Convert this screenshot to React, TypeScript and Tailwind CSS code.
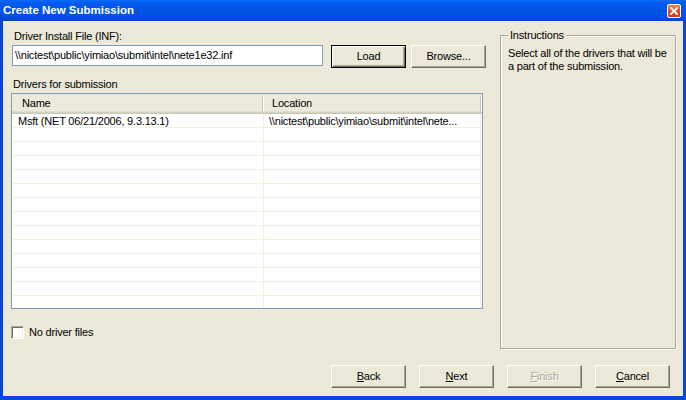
import React from 'react';

const rows = Array.from({ length: 14 }, (_, i) => i);

function XpButton({
  children,
  isDefault,
  disabled,
}: {
  children: React.ReactNode;
  isDefault?: boolean;
  disabled?: boolean;
}) {
  const frame = isDefault
    ? 'border border-black shadow-[inset_1px_1px_0_#fff,inset_-1px_-1px_0_#716F64,inset_-2px_-2px_0_#ACA899]'
    : 'border border-t-white border-l-white border-r-[#716F64] border-b-[#716F64] shadow-[inset_-1px_-1px_0_#ACA899]';
  return (
    <button
      className={`shrink-0 w-[75px] h-[23px] flex items-center justify-center bg-[#ECE9D8] text-[11px] leading-[13px] ${frame} ${
        disabled ? 'text-[#ACA899] [text-shadow:1px_1px_0_#fff]' : 'text-black'
      }`}
    >
      {children}
    </button>
  );
}

export default function App() {
  return (
    <div className="w-[686px] h-[400px] flex flex-col bg-[#0846dc] font-['Liberation_Sans',Arial,sans-serif] tracking-[-0.2px] select-none">
      {/* Title bar */}
      <div className="h-[21px] flex items-center justify-between pl-[3px] pr-[5px] bg-[linear-gradient(to_bottom,#0a6cf8_0%,#0059ee_15%,#0055e5_50%,#0050dc_80%,#0044c6_100%)]">
        <span className="text-white font-bold text-[11.5px] tracking-normal leading-[21px]">Create New Submission</span>
        <div className="w-[14px] h-[14px] rounded-[2px] border border-white bg-[linear-gradient(to_bottom,#ec7c5c,#dc4a26_60%,#c8401e)] flex items-center justify-center">
          <svg width="8" height="8" viewBox="0 0 8 8">
            <path d="M1 1 L7 7 M7 1 L1 7" stroke="#fff" strokeWidth="1.8" strokeLinecap="square" />
          </svg>
        </div>
      </div>

      {/* Client area */}
      <div className="flex-1 mx-[3px] mb-[4px] bg-[#ECE9D8] flex flex-col text-[11px] text-black">
        <div className="flex">
          {/* Left column */}
          <div className="shrink-0 w-[472px] ml-[8px] pt-[8px] flex flex-col">
            <div className="leading-[14px] pl-[3px]">Driver Install File (INF):</div>
            <div className="flex mt-[2px] pl-[1px]">
              <div className="shrink-0 w-[311px] h-[21px] border border-[#7F9DB9] bg-white flex items-center pl-[2px] leading-[13px] overflow-hidden whitespace-nowrap">
                \\nictest\public\yimiao\submit\intel\nete1e32.inf
              </div>
              <div className="shrink-0 ml-[8px] flex gap-[5px]">
                <XpButton isDefault>Load</XpButton>
                <XpButton>Browse...</XpButton>
              </div>
            </div>
            <div className="leading-[14px] pl-[2px] mt-[9px]">Drivers for submission</div>
            <div className="mt-[2px] h-[216px] border border-[#7F9DB9] bg-white overflow-hidden">
              {/* Header */}
              <div className="h-[20px] flex bg-[#EBEADB] shadow-[inset_0_-1px_0_#CBC7B8,inset_0_-2px_0_#D6D2C2,inset_0_-3px_0_#E2DECD]">
                <div className="w-[252px] flex items-start">
                  <div className="flex-1 pl-[10px] leading-[19px]">Name</div>
                  <div className="w-[2px] h-[14px] mt-[3px] border-l border-[#C7C5B2] bg-white" />
                </div>
                <div className="w-[218px] flex items-start">
                  <div className="flex-1 pl-[8px] leading-[19px]">Location</div>
                  <div className="w-[2px] h-[14px] mt-[3px] border-l border-[#C7C5B2] bg-white" />
                </div>
              </div>
              {/* Rows */}
              {rows.map((i) => (
                <div key={i} className="h-[14px] flex border-b border-[#F1EFE2]">
                  <div className="w-[252px] border-r border-[#F1EFE2] pl-[6px] leading-[14px] whitespace-nowrap overflow-hidden">
                    {i === 0 ? 'Msft (NET 06/21/2006, 9.3.13.1)' : ''}
                  </div>
                  <div className="w-[217px] border-r border-[#F1EFE2] pl-[5px] leading-[14px] whitespace-nowrap overflow-hidden">
                    {i === 0 ? '\\\\nictest\\public\\yimiao\\submit\\intel\\nete...' : ''}
                  </div>
                </div>
              ))}
            </div>
            <div className="flex items-center mt-[17px] h-[13px]">
              <div className="w-[13px] h-[13px] bg-white border border-t-[#ACA899] border-l-[#ACA899] border-r-white border-b-white shadow-[inset_1px_1px_0_#716F64,inset_-1px_-1px_0_#F1EFE2]" />
              <span className="ml-[5px] leading-[13px]">No driver files</span>
            </div>
          </div>

          {/* Instructions group box */}
          <div className="shrink-0 relative ml-[17px] mt-[14px] w-[176px] h-[314px] border border-[#ACA899] shadow-[inset_1px_1px_0_#fff,1px_1px_0_#fff]">
            <span className="absolute -top-[8px] left-[7px] px-[2px] bg-[#ECE9D8] leading-[14px]">Instructions</span>
            <div className="pt-[11px] pl-[7px] leading-[13px]">
              Select all of the drivers that will be
              <br />
              a part of the submission.
            </div>
          </div>
        </div>

        {/* Wizard buttons */}
        <div className="flex justify-end gap-[13px] pr-[13px] mt-[16px]">
          <XpButton>
            <span className="underline">B</span>ack
          </XpButton>
          <XpButton>
            <span className="underline">N</span>ext
          </XpButton>
          <XpButton disabled>
            <span className="underline">F</span>inish
          </XpButton>
          <XpButton>
            <span className="underline">C</span>ancel
          </XpButton>
        </div>
      </div>
    </div>
  );
}
